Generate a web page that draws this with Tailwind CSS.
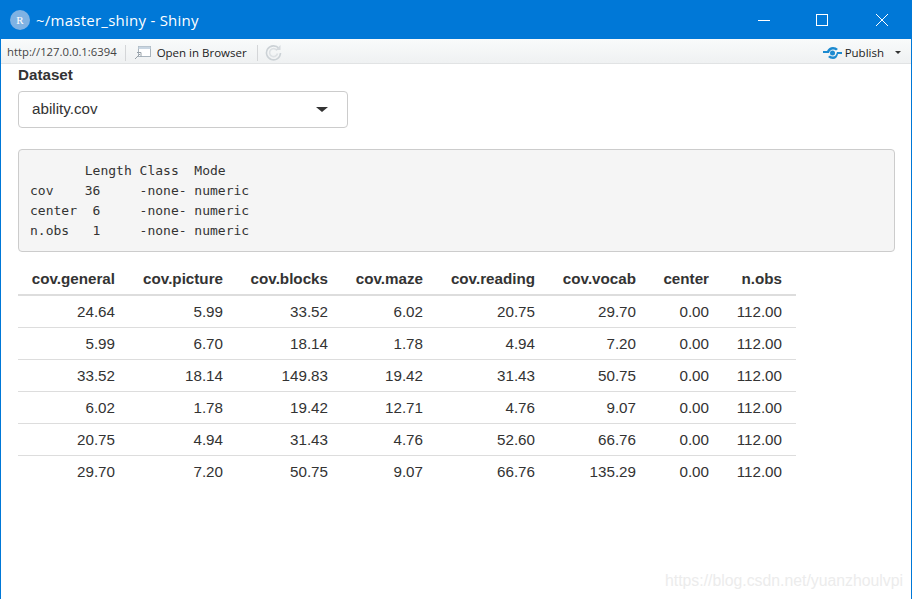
<!DOCTYPE html>
<html lang="en">
<head>
  <meta charset="UTF-8" />
  <title>~/master_shiny - Shiny</title>
  <script src="https://cdn.jsdelivr.net/npm/@tailwindcss/browser@4"></script>
</head>
<body class="bg-white overflow-hidden">
<div class="relative w-[912px] h-[599px] flex flex-col border border-[#0078d7] border-b-0 font-['Liberation_Sans',sans-serif] text-[#333]">

  <!-- title bar -->
  <div class="h-[38px] bg-[#0078d7] flex items-center text-white shrink-0">
    <div class="ml-[9px] w-5 h-5 rounded-full bg-[#7fb2e3] flex items-center justify-center text-[11px] font-['Liberation_Serif',serif]">R</div>
    <div class="ml-[6px] text-[15px] font-['Open_Sans',sans-serif] tracking-[0.25px]">~/master_shiny - Shiny</div>
    <div class="ml-auto mr-[6px] flex items-center">
      <svg class="w-[46px] h-[38px]" viewBox="0 0 46 38"><path d="M10 19.500h12" stroke="#fff" stroke-width="1" /></svg>
      <svg class="ml-[5px] w-[46px] h-[38px]" viewBox="0 0 46 38"><rect x="17.500" y="13.500" width="11" height="11" fill="none" stroke="#fff" /></svg>
      <svg class="ml-[14px] w-[46px] h-[38px]" viewBox="0 0 46 38"><path d="M17 13l12 12M29 13l-12 12" stroke="#fff" stroke-width="1" /></svg>
    </div>
  </div>

  <!-- toolbar -->
  <div class="h-[25px] bg-gradient-to-b from-[#f9fbfb] to-[#eff1f2] border-b border-[#e1e3e4] flex items-center pt-[3px] text-[#222] shrink-0 font-['Open_Sans',sans-serif]">
    <span class="ml-[6px] text-[11.3px] text-[#444]">http://127.0.0.1:6394</span>
    <span class="ml-[8px] w-px h-[16px] bg-[#d4d6d8]"></span>
    <svg class="ml-[8px] w-[18px] h-[15px]" viewBox="0 0 18 15"><rect x="4.500" y="1.500" width="12" height="10" fill="#fff" stroke="#a9b4bd" /><rect x="4.500" y="1.500" width="12" height="2.500" fill="#c9d6e2" /><path d="M1 14l5-5M3 7.500h4v4" stroke="#98a1a8" fill="none" /></svg>
    <span class="ml-[5px] text-[11.500px]">Open in Browser</span>
    <span class="ml-[10px] w-px h-[16px] bg-[#d4d6d8]"></span>
    <svg class="ml-[6px] -mt-[2px] w-[19px] h-[18px]" viewBox="0 0 18 18"><path d="M14.500 5.500A7 7 0 1 0 16 10" fill="none" stroke="#ccd2d6" stroke-width="1.600" /><path d="M12.500 7.500A4 4 0 1 0 13 10.500" fill="none" stroke="#dde1e4" stroke-width="1.600" /><path d="M11 7h5V2z" fill="#d5dade" /></svg>
    <div class="ml-auto mr-[1px] flex items-center">
      <svg class="w-[19px] h-[14px]" viewBox="0 0 19 14"><path d="M0 5h4q2-4 6-4 3 0 5 2l-2 1.500q-1-1-3-1-3 0-4 3.500H0z" fill="#1c8ad0" /><path d="M19 8h-4q-1 5-5 5-3 0-5-2l2-1.500q1 1 3 1 3 0 4-4.500h5z" fill="#1c8ad0" /><circle cx="9.500" cy="7" r="2.500" fill="#1c8ad0" /></svg>
      <span class="ml-[3px] text-[11.500px]">Publish</span>
      <span class="ml-[11px] mr-[9px] w-0 h-0 border-x-[3.500px] border-x-transparent border-t-[3.500px] border-t-[#333]"></span>
    </div>
  </div>

  <!-- shiny app -->
  <div class="flex-1 pl-[17px] pr-[16px] text-[15.200px] leading-[20px]">
    <label class="block font-bold mt-[1px]">Dataset</label>
    <div class="mt-[6px] w-[330px] h-[37px] border border-[#ccc] rounded-[4px] flex items-center justify-between pl-[13px] pr-[19px] text-[#333]">
      <span class="pb-[2px]">ability.cov</span>
      <span class="w-0 h-0 border-x-[6px] border-x-transparent border-t-[5px] border-t-[#333]"></span>
    </div>

    <pre class="mt-[21px] h-[103px] pt-[11px] pl-[11px] bg-[#f5f5f5] border border-[#ccc] rounded-[4px] text-[13px] leading-[20px] font-['DejaVu_Sans_Mono',monospace] text-[#333]">       Length Class  Mode   
cov    36     -none- numeric
center  6     -none- numeric
n.obs   1     -none- numeric</pre>

    <table class="mt-[11px] w-[778px] table-fixed border-collapse text-right">
      <colgroup>
        <col class="w-[111px]" /><col class="w-[108px]" /><col class="w-[105px]" /><col class="w-[95px]" /><col class="w-[112px]" /><col class="w-[101px]" /><col class="w-[73px]" /><col class="w-[73px]" />
      </colgroup>
      <thead>
        <tr class="h-[32px] border-b-2 border-[#ddd] font-bold">
          <th class="pr-[14px] font-bold">cov.general</th><th class="pr-[14px] font-bold">cov.picture</th><th class="pr-[14px] font-bold">cov.blocks</th><th class="pr-[14px] font-bold">cov.maze</th><th class="pr-[14px] font-bold">cov.reading</th><th class="pr-[14px] font-bold">cov.vocab</th><th class="pr-[14px] font-bold">center</th><th class="pr-[14px] font-bold">n.obs</th>
        </tr>
      </thead>
      <tbody>
        <tr class="h-[32px] border-b border-[#ddd]"><td class="pr-[14px] pt-[2px]">24.64</td><td class="pr-[14px] pt-[2px]">5.99</td><td class="pr-[14px] pt-[2px]">33.52</td><td class="pr-[14px] pt-[2px]">6.02</td><td class="pr-[14px] pt-[2px]">20.75</td><td class="pr-[14px] pt-[2px]">29.70</td><td class="pr-[14px] pt-[2px]">0.00</td><td class="pr-[14px] pt-[2px]">112.00</td></tr>
        <tr class="h-[32px] border-b border-[#ddd]"><td class="pr-[14px] pt-[2px]">5.99</td><td class="pr-[14px] pt-[2px]">6.70</td><td class="pr-[14px] pt-[2px]">18.14</td><td class="pr-[14px] pt-[2px]">1.78</td><td class="pr-[14px] pt-[2px]">4.94</td><td class="pr-[14px] pt-[2px]">7.20</td><td class="pr-[14px] pt-[2px]">0.00</td><td class="pr-[14px] pt-[2px]">112.00</td></tr>
        <tr class="h-[32px] border-b border-[#ddd]"><td class="pr-[14px] pt-[2px]">33.52</td><td class="pr-[14px] pt-[2px]">18.14</td><td class="pr-[14px] pt-[2px]">149.83</td><td class="pr-[14px] pt-[2px]">19.42</td><td class="pr-[14px] pt-[2px]">31.43</td><td class="pr-[14px] pt-[2px]">50.75</td><td class="pr-[14px] pt-[2px]">0.00</td><td class="pr-[14px] pt-[2px]">112.00</td></tr>
        <tr class="h-[32px] border-b border-[#ddd]"><td class="pr-[14px] pt-[2px]">6.02</td><td class="pr-[14px] pt-[2px]">1.78</td><td class="pr-[14px] pt-[2px]">19.42</td><td class="pr-[14px] pt-[2px]">12.71</td><td class="pr-[14px] pt-[2px]">4.76</td><td class="pr-[14px] pt-[2px]">9.07</td><td class="pr-[14px] pt-[2px]">0.00</td><td class="pr-[14px] pt-[2px]">112.00</td></tr>
        <tr class="h-[32px] border-b border-[#ddd]"><td class="pr-[14px] pt-[2px]">20.75</td><td class="pr-[14px] pt-[2px]">4.94</td><td class="pr-[14px] pt-[2px]">31.43</td><td class="pr-[14px] pt-[2px]">4.76</td><td class="pr-[14px] pt-[2px]">52.60</td><td class="pr-[14px] pt-[2px]">66.76</td><td class="pr-[14px] pt-[2px]">0.00</td><td class="pr-[14px] pt-[2px]">112.00</td></tr>
        <tr class="h-[32px]"><td class="pr-[14px] pt-[2px]">29.70</td><td class="pr-[14px] pt-[2px]">7.20</td><td class="pr-[14px] pt-[2px]">50.75</td><td class="pr-[14px] pt-[2px]">9.07</td><td class="pr-[14px] pt-[2px]">66.76</td><td class="pr-[14px] pt-[2px]">135.29</td><td class="pr-[14px] pt-[2px]">0.00</td><td class="pr-[14px] pt-[2px]">112.00</td></tr>
      </tbody>
    </table>
  </div>

  <!-- watermark -->
  <div class="absolute right-[8px] bottom-[6px] text-[15.800px] text-[#ececec]">https://blog.csdn.net/yuanzhoulvpi</div>
</div>
</body>
</html>
